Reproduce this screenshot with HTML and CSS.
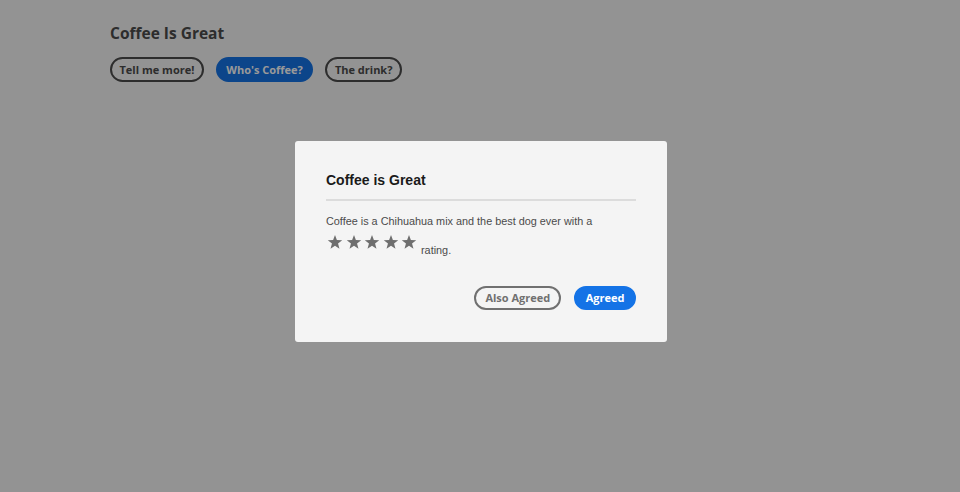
FILE: index.html
```html
<!DOCTYPE html>
<html>
<head>
<meta charset="utf-8">
<link rel="stylesheet" href="styles.css">
</head>
<body>
<main class="page">
  <h1 class="page-title">Coffee Is Great</h1>
  <div class="actions">
    <button class="btn btn-outline">Tell me more!</button>
    <button class="btn btn-cta">Who's Coffee?</button>
    <button class="btn btn-outline">The drink?</button>
  </div>
</main>
<div class="overlay">
  <section class="dialog">
    <h2 class="dialog-title">Coffee is Great</h2>
    <hr class="divider">
    <div class="dialog-body">
      <p>Coffee is a Chihuahua mix and the best dog ever with a</p>
      <p class="rating-line"><span class="stars"><svg class="star" viewBox="0 0 18 18"><path d="M9 1.9L10.88 6.91 16.23 7.15 12.04 10.49 13.47 15.65 9 12.7 4.53 15.65 5.96 10.49 1.77 7.15 7.12 6.91Z"/></svg><svg class="star" viewBox="0 0 18 18"><path d="M9 1.9L10.88 6.91 16.23 7.15 12.04 10.49 13.47 15.65 9 12.7 4.53 15.65 5.96 10.49 1.77 7.15 7.12 6.91Z"/></svg><svg class="star" viewBox="0 0 18 18"><path d="M9 1.9L10.88 6.91 16.23 7.15 12.04 10.49 13.47 15.65 9 12.7 4.53 15.65 5.96 10.49 1.77 7.15 7.12 6.91Z"/></svg><svg class="star" viewBox="0 0 18 18"><path d="M9 1.9L10.88 6.91 16.23 7.15 12.04 10.49 13.47 15.65 9 12.7 4.53 15.65 5.96 10.49 1.77 7.15 7.12 6.91Z"/></svg><svg class="star" viewBox="0 0 18 18"><path d="M9 1.9L10.88 6.91 16.23 7.15 12.04 10.49 13.47 15.65 9 12.7 4.53 15.65 5.96 10.49 1.77 7.15 7.12 6.91Z"/></svg></span> rating.</p>
    </div>
    <div class="dialog-footer">
      <button class="btn btn-secondary">Also Agreed</button>
      <button class="btn btn-primary">Agreed</button>
    </div>
  </section>
</div>
</body>
</html>
```

FILE: styles.css
```css
html, body {
  margin: 0;
  padding: 0;
  height: 100%;
}
body {
  background: #f5f5f5;
  font-family: "Liberation Sans", Arial, sans-serif;
}
.page {
  padding: 22px 0 0 110px;
}
.page-title {
  margin: 0;
  font-family: "Open Sans", sans-serif;
  font-weight: 700;
  font-size: 15.5px;
  line-height: 22px;
  color: #4b4b4b;
}
.actions {
  display: flex;
  gap: 12px;
  margin-top: 13px;
}
.btn {
  height: 24px;
  box-sizing: border-box;
  border-radius: 12px;
  border: 2px solid #4b4b4b;
  background: transparent;
  padding: 0 8px;
  font-family: "Open Sans", sans-serif;
  font-weight: 700;
  font-size: 11px;
  line-height: 20px;
  color: #4b4b4b;
  cursor: pointer;
}
.btn-outline {
  height: 25px;
  border-radius: 12.5px;
  padding: 0 7.5px;
}
.btn-cta {
  height: 25px;
  border-radius: 12.5px;
  background: #1473e6;
  border-color: #1473e6;
  color: #ffffff;
  padding: 0 8.5px;
}
.overlay {
  position: fixed;
  inset: 0;
  background: rgba(0, 0, 0, 0.4);
  display: flex;
  align-items: center;
  justify-content: center;
  padding: 0 0 10px 2px;
  box-sizing: border-box;
}
.dialog {
  width: 372px;
  height: 201px;
  box-sizing: border-box;
  background: #f4f4f4;
  border-radius: 3px;
  padding: 30px 31px 0;
}
.dialog-title {
  margin: 0;
  font-size: 14px;
  line-height: 18px;
  font-weight: 700;
  color: #1a1a1a;
}
.divider {
  margin: 10px 0 0;
  border: 0;
  height: 2px;
  background: #dcdcdc;
}
.dialog-body {
  margin-top: 12px;
  font-size: 10.85px;
  line-height: 16px;
  color: #4b4b4b;
}
.dialog-body p {
  margin: 0;
}
.dialog-body .rating-line {
  margin-top: 4px;
}
.stars {
  display: inline-flex;
  gap: 0.5px;
  vertical-align: 3px;
}
.star {
  width: 18px;
  height: 18px;
  fill: #6e6e6e;
}
.dialog-footer {
  display: flex;
  justify-content: flex-end;
  gap: 13px;
  margin-top: 28px;
}
.btn-secondary {
  border-color: #707070;
  color: #707070;
  padding: 0 9px;
}
.btn-primary {
  background: #1473e6;
  border-color: #1473e6;
  color: #ffffff;
  padding: 0 9.5px;
}
```
